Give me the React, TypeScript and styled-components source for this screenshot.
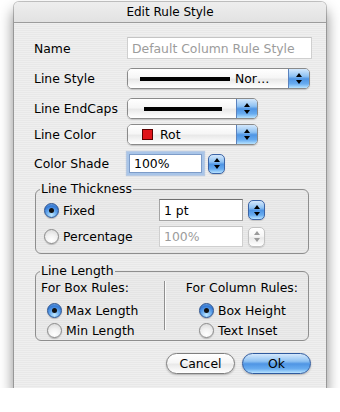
import styled, { createGlobalStyle, css } from "styled-components";

const GlobalStyle = createGlobalStyle`
  html, body {
    margin: 0;
    background: #ffffff;
  }
  body {
    font-family: "DejaVu Sans", "Liberation Sans", sans-serif;
    font-size: 12.4px;
    color: #000;
  }
`;

const aquaBlue = css`
  background: linear-gradient(
    to bottom,
    #d4e8fc 0%,
    #8fc2f3 38%,
    #4f95e4 52%,
    #68acf0 78%,
    #b8e3ff 100%
  );
`;

const aquaWhite = css`
  background: linear-gradient(
    to bottom,
    #ffffff 0%,
    #f6f6f6 45%,
    #e9e9e9 55%,
    #f8f8f8 85%,
    #ffffff 100%
  );
`;

const Window = styled.div`
  margin: 2px 0 0 14px;
  width: 312px;
  height: 386px;
  display: flex;
  flex-direction: column;
  border-radius: 5px 5px 0 0;
  overflow: hidden;
  box-shadow: 0 0 0 1px rgba(0, 0, 0, 0.22), 0 9px 14px 1px rgba(0, 0, 0, 0.45);
`;

const TitleBar = styled.div`
  height: 20px;
  flex-shrink: 0;
  display: flex;
  align-items: center;
  justify-content: center;
  border-bottom: 1px solid #9c9c9c;
  background: linear-gradient(to bottom, #eeeeee, #e2e2e2);
  font-size: 12px;
`;

const Body = styled.div`
  flex: 1;
  padding: 0 14px 0 20px;
  background: repeating-linear-gradient(
    to bottom,
    #efefef 0px,
    #efefef 1px,
    #e8e8e8 1px,
    #e8e8e8 2px
  );
`;

const Row = styled.div<{ $top: number; $h: number }>`
  display: grid;
  grid-template-columns: 93px auto;
  align-items: center;
  justify-items: start;
  margin-top: ${(p) => p.$top}px;
  height: ${(p) => p.$h}px;
`;

const Label = styled.span`
  white-space: nowrap;
`;

const TextField = styled.div<{ $w: number; $h: number; $disabled?: boolean; $focus?: boolean }>`
  box-sizing: border-box;
  width: ${(p) => p.$w}px;
  height: ${(p) => p.$h}px;
  display: flex;
  align-items: center;
  padding-left: 4px;
  background: #fff;
  white-space: nowrap;
  border: 1px solid ${(p) => (p.$disabled ? "#cfcfcf" : "#a4a4a4")};
  border-top-color: ${(p) => (p.$disabled ? "#c4c4c4" : "#6f6f6f")};
  color: ${(p) => (p.$disabled ? "#9c9c9c" : "#000")};
  ${(p) =>
    p.$focus &&
    css`
      border-color: #7d9cc8;
      box-shadow: 0 0 0 2px #a9c5e8, 0 0 1px 3px rgba(120, 160, 215, 0.45);
    `}
`;

const Popup = styled.div<{ $w: number }>`
  box-sizing: border-box;
  width: ${(p) => p.$w}px;
  height: 21px;
  display: flex;
  border: 1px solid #8a8a8a;
  border-radius: 5px;
  overflow: hidden;
  box-shadow: 0 1px 1px rgba(0, 0, 0, 0.18);
`;

const PopupFace = styled.div<{ $pad: number }>`
  flex: 1;
  display: flex;
  align-items: center;
  padding-left: ${(p) => p.$pad}px;
  white-space: nowrap;
  ${aquaWhite}
`;

const PopupArrows = styled.div`
  width: 20px;
  display: flex;
  align-items: center;
  justify-content: center;
  border-left: 1px solid #5b82bd;
  ${aquaBlue}
`;

const LineSample = styled.span<{ $w: number; $t: number }>`
  display: inline-block;
  width: ${(p) => p.$w}px;
  height: ${(p) => p.$t}px;
  background: #000;
`;

const PopupText = styled.span`
  margin-left: 5px;
`;

const Swatch = styled.span`
  box-sizing: border-box;
  width: 11px;
  height: 11px;
  background: #e0141a;
  border: 1px solid #5a0000;
  margin-right: 7px;
`;

const Stepper = styled.div<{ $disabled?: boolean }>`
  box-sizing: border-box;
  width: 17px;
  height: 20px;
  border-radius: 5px;
  display: flex;
  align-items: center;
  justify-content: center;
  border: 1px solid ${(p) => (p.$disabled ? "#c2c2c2" : "#3c64a6")};
  box-shadow: 0 1px 1px rgba(0, 0, 0, 0.15);
  ${(p) => (p.$disabled ? aquaWhite : aquaBlue)}
`;

const Group = styled.fieldset<{ $top: number }>`
  margin: ${(p) => p.$top}px 3px 0 1px;
  padding: 0;
  min-width: 0;
  border: 1px solid #8e8e8e;
  border-radius: 6px;
  background: rgba(0, 0, 0, 0.015);
`;

const Legend = styled.legend`
  margin-left: 4px;
  padding: 0 1px;
  line-height: 14px;
`;

const ThicknessGrid = styled.div`
  display: grid;
  grid-template-columns: 110px 84px 16px;
  grid-template-rows: 22px 21px;
  column-gap: 5px;
  row-gap: 5px;
  align-items: center;
  padding: 3px 0 6px 8px;
`;

const RadioLine = styled.div<{ $h?: number }>`
  display: flex;
  align-items: center;
  gap: 4px;
  height: ${(p) => p.$h ?? 20}px;
  white-space: nowrap;
`;

const RadioButton = styled.span<{ $on?: boolean }>`
  position: relative;
  box-sizing: border-box;
  width: 15px;
  height: 15px;
  border-radius: 50%;
  flex-shrink: 0;
  box-shadow: 0 1px 1px rgba(0, 0, 0, 0.2);
  ${(p) =>
    p.$on
      ? css`
          border: 1px solid #2a5290;
          background: radial-gradient(circle at 50% 85%, #c2eaff 0%, #6fb0f0 35%, #3479d4 70%, #8ab8e8 100%);
          &::after {
            content: "";
            position: absolute;
            left: 4px;
            top: 4px;
            width: 5px;
            height: 5px;
            border-radius: 50%;
            background: #111;
          }
        `
      : css`
          border: 1px solid #8a8a8a;
          background: radial-gradient(circle at 50% 80%, #ffffff 0%, #f2f2f2 45%, #d4d4d4 100%);
        `}
`;

const LengthBox = styled.div`
  display: flex;
`;

const Column = styled.div<{ $w: number; $right?: boolean }>`
  width: ${(p) => p.$w}px;
  display: flex;
  flex-direction: column;
  align-items: ${(p) => (p.$right ? "flex-end" : "flex-start")};
  padding: ${(p) => (p.$right ? "3px 10px 0 0" : "3px 0 0 5px")};
  box-sizing: border-box;
`;

const ColumnHead = styled.div`
  height: 14px;
  line-height: 14px;
  white-space: nowrap;
`;

const RadioList = styled.div<{ $indent: number }>`
  align-self: stretch;
  margin-top: 5px;
  padding-left: ${(p) => p.$indent}px;
`;

const Divider = styled.div`
  width: 1px;
  margin: 3px 0 10px;
  background: #8f8f8f;
  box-shadow: 1px 0 0 #fafafa;
`;

const ButtonBar = styled.div`
  display: flex;
  justify-content: flex-end;
  gap: 7px;
  margin: 12px 1px 0 0;
`;

const Button = styled.div<{ $primary?: boolean }>`
  box-sizing: border-box;
  width: 69px;
  height: 21px;
  border-radius: 11px;
  display: flex;
  align-items: center;
  justify-content: center;
  border: 1px solid ${(p) => (p.$primary ? "#2f5a9e" : "#7e7e7e")};
  box-shadow: 0 1px 2px rgba(0, 0, 0, 0.25);
  ${(p) => (p.$primary ? aquaBlue : aquaWhite)}
`;

const Arrows = ({ color = "#000", gap = 3 }: { color?: string; gap?: number }) => (
  <svg width="6" height={8 + gap} viewBox={`0 0 6 ${8 + gap}`}>
    <polygon points="3,0 6,4 0,4" fill={color} />
    <polygon points={`0,${4 + gap} 6,${4 + gap} 3,${8 + gap}`} fill={color} />
  </svg>
);

const Radio = ({ on, label, h }: { on?: boolean; label: string; h?: number }) => (
  <RadioLine $h={h}>
    <RadioButton $on={on} />
    <span>{label}</span>
  </RadioLine>
);

export default function App() {
  return (
    <>
      <GlobalStyle />
      <Window>
        <TitleBar>Edit Rule Style</TitleBar>
        <Body>
          <Row $top={14} $h={22}>
            <Label>Name</Label>
            <TextField $w={185} $h={22} $disabled>
              Default Column Rule Style
            </TextField>
          </Row>
          <Row $top={9} $h={21}>
            <Label>Line Style</Label>
            <Popup $w={183}>
              <PopupFace $pad={12}>
                <LineSample $w={90} $t={4} />
                <PopupText>Nor…</PopupText>
              </PopupFace>
              <PopupArrows>
                <Arrows />
              </PopupArrows>
            </Popup>
          </Row>
          <Row $top={9} $h={21}>
            <Label>Line EndCaps</Label>
            <Popup $w={131}>
              <PopupFace $pad={16}>
                <LineSample $w={78} $t={4} />
              </PopupFace>
              <PopupArrows>
                <Arrows />
              </PopupArrows>
            </Popup>
          </Row>
          <Row $top={5} $h={21}>
            <Label>Line Color</Label>
            <Popup $w={131}>
              <PopupFace $pad={14}>
                <Swatch />
                <span>Rot</span>
              </PopupFace>
              <PopupArrows>
                <Arrows />
              </PopupArrows>
            </Popup>
          </Row>
          <Row $top={7} $h={23}>
            <Label>Color Shade</Label>
            <RadioLine $h={23}>
              <TextField $w={73} $h={19} $focus style={{ marginLeft: 2 }}>
                100%
              </TextField>
              <Stepper style={{ marginLeft: 2 }}>
                <Arrows />
              </Stepper>
            </RadioLine>
          </Row>

          <Group $top={7}>
            <Legend>Line Thickness</Legend>
            <ThicknessGrid>
              <Radio on label="Fixed" h={22} />
              <TextField $w={84} $h={22}>
                1 pt
              </TextField>
              <Stepper>
                <Arrows />
              </Stepper>
              <Radio label="Percentage" h={21} />
              <TextField $w={84} $h={21} $disabled>
                100%
              </TextField>
              <Stepper $disabled>
                <Arrows color="#9a9a9a" />
              </Stepper>
            </ThicknessGrid>
          </Group>

          <Group $top={10}>
            <Legend>Line Length</Legend>
            <LengthBox>
              <Column $w={128}>
                <ColumnHead>For Box Rules:</ColumnHead>
                <RadioList $indent={6}>
                  <Radio on label="Max Length" />
                  <Radio label="Min Length" />
                </RadioList>
              </Column>
              <Divider />
              <Column $w={143} $right>
                <ColumnHead>For Column Rules:</ColumnHead>
                <RadioList $indent={34}>
                  <Radio on label="Box Height" />
                  <Radio label="Text Inset" />
                </RadioList>
              </Column>
            </LengthBox>
          </Group>

          <ButtonBar>
            <Button>Cancel</Button>
            <Button $primary>Ok</Button>
          </ButtonBar>
        </Body>
      </Window>
    </>
  );
}
